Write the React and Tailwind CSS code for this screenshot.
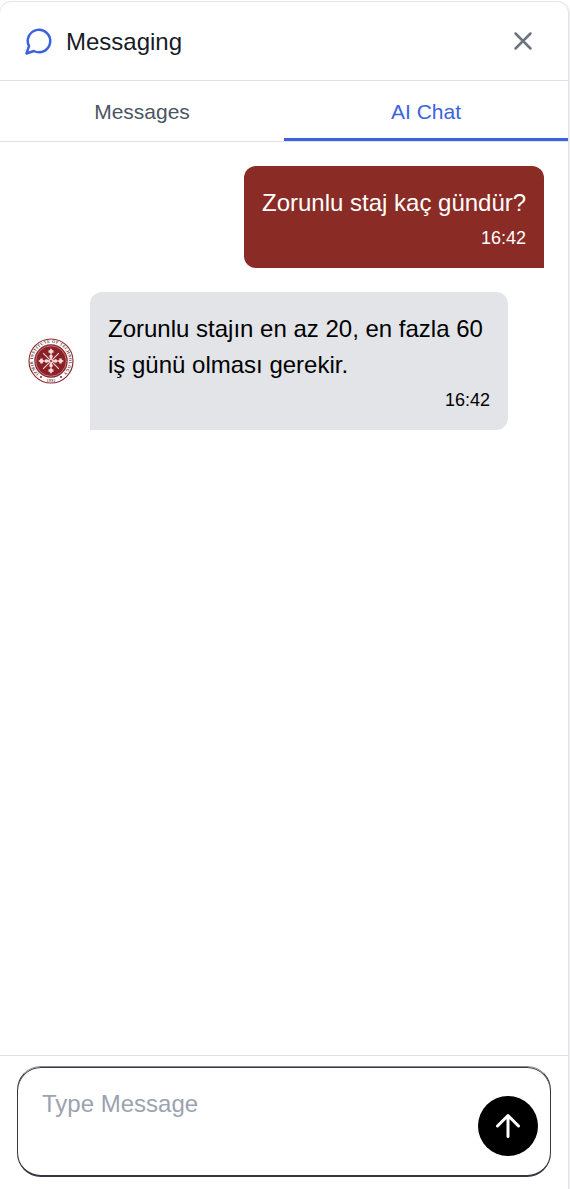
import React from "react";

function ChatIcon() {
  return (
    <svg className="size-[30px] text-[#3b63e0]" viewBox="0 0 24 24" fill="none" stroke="currentColor" strokeWidth="2" strokeLinecap="round" strokeLinejoin="round">
      <path d="M7.9 20A9 9 0 1 0 4 16.1L2 22Z" />
    </svg>
  );
}

function CloseIcon() {
  return (
    <svg className="size-[30px]" viewBox="0 0 24 24" fill="none" stroke="currentColor" strokeWidth="2" strokeLinecap="round" strokeLinejoin="round">
      <path d="M18 6 6 18M6 6l12 12" />
    </svg>
  );
}

function ArrowUpIcon() {
  return (
    <svg className="size-9" viewBox="0 0 24 24" fill="none" stroke="currentColor" strokeWidth="2" strokeLinecap="round" strokeLinejoin="round">
      <path d="m5 12 7-7 7 7M12 19V5" />
    </svg>
  );
}

function Seal() {
  return (
    <svg className="size-[46px] shrink-0" viewBox="0 0 92 92" role="img" aria-label="Izmir Institute of Technology">
      <circle cx="46" cy="46" r="44" fill="#fff" stroke="#8b2a2e" strokeWidth="2.3" />
      <circle cx="46" cy="46" r="33.5" fill="#8b2126" />
      <circle cx="46" cy="46" r="30.5" fill="none" stroke="#dcb8ba" strokeWidth="1.2" />
      <defs>
        <path id="seal-ring" d="M22 72A35.8 35.8 0 1 1 70 72" />
      </defs>
      <text className="fill-[#6f3438] text-[8.5px] font-bold" fontFamily="Liberation Serif, serif">
        <textPath href="#seal-ring" textLength="171">IZMIR INSTITUTE OF TECHNOLOGY</textPath>
      </text>
      <text x="46" y="87" textAnchor="middle" className="fill-[#6f3438] text-[7px] font-bold" fontFamily="Liberation Serif, serif" textLength="17">1992</text>
      <circle cx="26" cy="78" r="2" fill="#8b2126" />
      <circle cx="66" cy="78" r="2" fill="#8b2126" />
      <g fill="#f2dcdc">
        {[0, 90, 180, 270].map((angle) => (
          <g key={angle} transform={`rotate(${angle} 46 46)`}>
            <path d="M46 20l2.5 4.5h2.5v5h-2.5l-2.5 4-2.5-4h-2.5v-5h2.5Z" />
            <path d="M46 32l4 4-3 7h-2l-3-7Z" />
            <path d="M48 42.5 61 29.5l1.5 1.5L49.5 44Z" />
          </g>
        ))}
        <circle cx="46" cy="46" r="4.5" />
      </g>
      <circle cx="46" cy="46" r="2.5" fill="#a94a4f" />
    </svg>
  );
}

export default function App() {
  return (
    <div className="h-[1189px] w-full overflow-hidden bg-white pt-px font-['Liberation_Sans',Arial,sans-serif]">
      <div className="-ml-px flex h-[1200px] w-[570px] flex-col rounded-t-xl border border-[#e2e4e8] pb-3 shadow-[1px_0_0_#f1f1f3]">
        <header className="flex h-[79px] items-center justify-between border-b border-[#e0e2e8] pr-[30px] pl-6">
          <div className="flex items-center gap-3">
            <ChatIcon />
            <h1 className="pt-0.5 text-[24px] leading-9 text-[#171b26]">Messaging</h1>
          </div>
          <button aria-label="Close" className="text-[#6b7280]"><CloseIcon /></button>
        </header>

        <nav className="flex h-[61px] border-b border-[#e0e2e8] text-[21px] leading-[30px]">
          <button className="flex-1 pt-0.5 text-[#4b5563]">Messages</button>
          <button className="flex-1 border-b-3 border-[#3b63e0] pt-[5px] text-[#3b63e0]">AI Chat</button>
        </nav>

        <main className="flex flex-1 flex-col gap-6 p-6">
          <div className="flex h-[102px] w-[300px] flex-col self-end rounded-xl rounded-br-none bg-[#8a2b26] px-[18px] pt-[19px] text-white">
            <p className="text-[24px] leading-9 whitespace-nowrap">Zorunlu staj kaç gündür?</p>
            <time className="mt-[5px] self-end text-[18px] leading-6">16:42</time>
          </div>
          <div className="flex items-center gap-4 pl-1">
            <Seal />
            <div className="flex h-[138px] w-[418px] flex-col rounded-xl rounded-bl-none bg-[#e2e4e8] px-[18px] pt-[19px] text-black">
              <p className="text-[24px] leading-9">Zorunlu stajın en az 20, en fazla 60 iş günü olması gerekir.</p>
              <time className="mt-[5px] self-end text-[18px] leading-6">16:42</time>
            </div>
          </div>
        </main>

        <footer className="h-[133px] border-t border-[#e0e2e8] px-[17px] pt-[10px]">
          <div className="flex h-[111px] items-start justify-between rounded-[24px] border border-b-2 border-[#343741] border-t-[#8b8d95] pr-3 pl-6 shadow-[inset_0_1px_0_#343741]">
            <textarea aria-label="Message" placeholder="Type Message" className="mt-[19px] h-[72px] w-[400px] resize-none text-[24px] leading-9 outline-none placeholder:text-[#9ca3af]" />
            <button aria-label="Send" className="mt-[29px] flex size-[60px] items-center justify-center rounded-full bg-black text-white"><ArrowUpIcon /></button>
          </div>
        </footer>
      </div>
    </div>
  );
}
